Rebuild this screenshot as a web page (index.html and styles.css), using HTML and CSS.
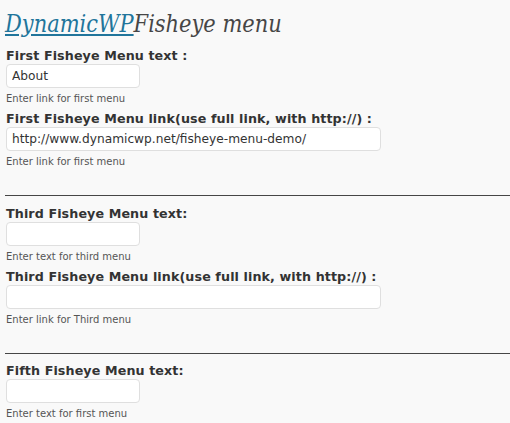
FILE: index.html
```html
<!DOCTYPE html>
<html>
<head>
<meta charset="utf-8">
<link rel="stylesheet" href="styles.css">
</head>
<body>
<div class="wrap">
  <h2 class="title"><a href="#" class="brand">DynamicWP</a>Fisheye menu</h2>

  <div class="field">
    <label class="label">First Fisheye Menu text :</label>
    <input class="input short" type="text" value="About">
    <div class="desc">Enter link for first menu</div>
  </div>
  <div class="field">
    <label class="label">First Fisheye Menu link(use full link, with http://) :</label>
    <input class="input long" type="text" value="http://www.dynamicwp.net/fisheye-menu-demo/">
    <div class="desc">Enter link for first menu</div>
  </div>

  <hr class="sep">

  <div class="field">
    <label class="label">Third Fisheye Menu text:</label>
    <input class="input short" type="text" value="">
    <div class="desc">Enter text for third menu</div>
  </div>
  <div class="field">
    <label class="label">Third Fisheye Menu link(use full link, with http://) :</label>
    <input class="input long" type="text" value="">
    <div class="desc">Enter link for Third menu</div>
  </div>

  <hr class="sep">

  <div class="field">
    <label class="label">Fifth Fisheye Menu text:</label>
    <input class="input short" type="text" value="">
    <div class="desc">Enter text for first menu</div>
  </div>
</div>
</body>
</html>
```

FILE: styles.css
```css
html, body {
  margin: 0;
  padding: 0;
  background: #f9f9f9;
}
.wrap {
  padding: 0 0 0 5px;
  font-family: "DejaVu Sans", sans-serif;
  color: #333;
}
.title {
  margin: 0 0 9.5px 0;
  padding-top: 8.5px;
  font-family: "DejaVu Serif Condensed", "DejaVu Serif", serif;
  font-stretch: condensed;
  font-style: italic;
  font-weight: normal;
  font-size: 23.3px;
  line-height: 30px;
  color: #464646;
}
.brand {
  color: #21759b;
  text-decoration: underline;
}
.field {
  display: flex;
  flex-direction: column;
  align-items: flex-start;
  padding-left: 1px;
}
.label {
  display: block;
  font-weight: bold;
  font-size: 12.7px;
  line-height: 15px;
  letter-spacing: 0.1px;
  color: #333;
  margin-bottom: 1px;
}
.input {
  box-sizing: border-box;
  height: 24px;
  border: 1px solid #dfdfdf;
  border-radius: 4px;
  background: #fff;
  padding: 0 5px;
  font-family: "DejaVu Sans", sans-serif;
  font-size: 12.2px;
  color: #333;
  margin: 0;
  outline: none;
}
.short { width: 134px; }
.long { width: 375px; }
.desc {
  font-size: 10px;
  line-height: 12px;
  margin-top: 5px;
  margin-bottom: 6px;
  color: #555;
}
.sep {
  margin: 21px 0 9.5px 0;
  border: 0;
  border-top: 1px solid #464646;
  height: 0;
}
```
